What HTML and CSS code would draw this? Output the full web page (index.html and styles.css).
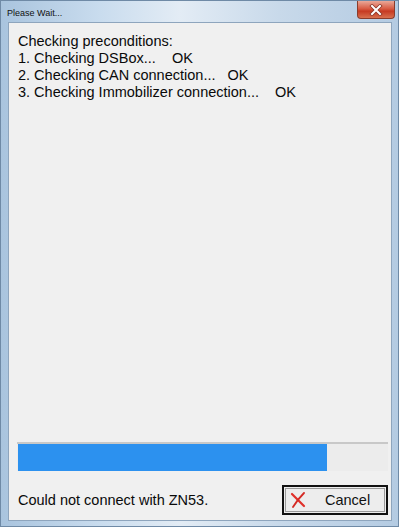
FILE: index.html
```html
<!DOCTYPE html>
<html lang="en">
<head>
    <meta charset="UTF-8">
    <meta name="viewport" content="width=device-width, initial-scale=1.0">
    <title>Please Wait...</title>
    <link rel="stylesheet" href="styles.css">
</head>
<body>

    <!-- Dialog window -->
    <div class="window">
        <div class="titlebar">
            <span class="title">Please Wait...</span>
            <div class="close">
                <svg width="14" height="12" viewBox="0 0 14 12">
                    <path d="M3 2 L11 10 M11 2 L3 10" stroke="#8a3426" stroke-width="3.6" stroke-linecap="square"/>
                    <path d="M3 2 L11 10 M11 2 L3 10" stroke="#ffffff" stroke-width="2" stroke-linecap="square"/>
                </svg>
            </div>
        </div>

        <div class="client">
            <div class="log">
                <div class="line">Checking preconditions:</div>
                <div class="line">1. Checking DSBox...    OK</div>
                <div class="line">2. Checking CAN connection...   OK</div>
                <div class="line">3. Checking Immobilizer connection...    OK</div>
            </div>

            <div class="progress">
                <div class="fill" style="width: 83.4%;"></div>
            </div>

            <div class="footer">
                <span>Could not connect with ZN53.</span>
                <button class="button">
                    <svg class="x-icon" width="16" height="16" viewBox="0 0 16 16">
                        <path d="M2 2 C6 6 10 10 14 14" stroke="#e0302a" stroke-width="2.2" fill="none" stroke-linecap="round"/>
                        <path d="M14 1 C10 5 6 10 3 15" stroke="#d42a24" stroke-width="1.8" fill="none" stroke-linecap="round"/>
                    </svg>
                    <span class="label">Cancel</span>
                </button>
            </div>
        </div>
    </div>

</body>
</html>
```

FILE: styles.css
```css
/* Dialog styles */
body { margin: 0; font-family: "Liberation Sans", Arial, sans-serif; color: #0a0a0a; }
.window { width: 399px; height: 527px; box-sizing: border-box; display: flex; flex-direction: column; padding: 0 6px 5px 7px;
    background: linear-gradient(90deg, #a9c4de 0%, #c9dcee 25%, #e3ecf5 45%, #c8d9ea 70%, #b4cbe2 100%); border: 1px solid #6f8aa6; }
.titlebar { height: 21px; display: flex; align-items: flex-start; }
.title { font-size: 9px; margin: 7px 0 0 -1px; color: #111; }
.close { margin-left: auto; margin-right: -3px; width: 38px; height: 18px; display: flex; align-items: center; justify-content: center;
    background: linear-gradient(180deg, #eaa898 0%, #d85c44 45%, #c63a22 60%, #d8704e 100%); border: 1px solid #8a3c2c; border-top: none; border-radius: 0 0 4px 4px; box-sizing: border-box; }
.client { flex: 1; background: #f0f0f0; border: 1px solid #8ea5bd; display: flex; flex-direction: column; padding: 10px 3px 5px 8px; }
.log { font-size: 14.5px; line-height: 17px; padding-left: 1px; }
.line { white-space: pre; }
.progress { margin-top: auto; height: 29px; box-sizing: border-box; border-top: 2px solid #c8c8c8; background: #ececec; padding: 0 0 0 1px; }
.fill { height: 27px; background: #2c91ef; }
.footer { display: flex; align-items: center; justify-content: space-between; margin-top: 14px; padding-left: 1px; font-size: 14.5px; }
.button { width: 106px; height: 30px; display: flex; align-items: center; padding: 0 0 0 6px; cursor: pointer; background: #ededed;
    border: 2px solid #111; outline: 1px solid #9a9a9a; outline-offset: -4px; font-family: inherit; font-size: 14.5px; color: #111; }
.label { margin-left: 19px; }
```
